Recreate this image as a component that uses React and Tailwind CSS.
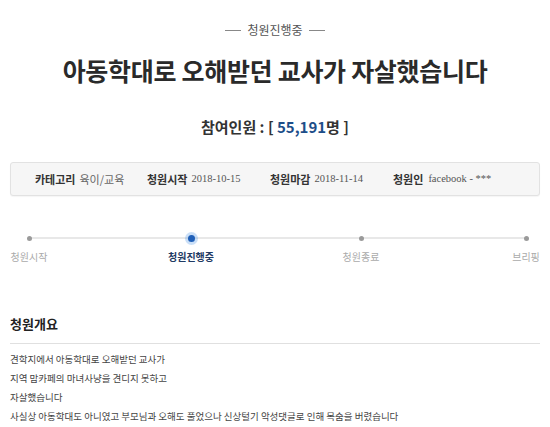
export default function App() {
  const steps = [
    { label: '청원시작', active: false, cls: 'w-[38px]' },
    { label: '청원진행중', active: true, cls: 'w-[50px] ml-[118px]' },
    { label: '청원종료', active: false, cls: 'w-[50px] ml-[120px]' },
    { label: '브리핑', active: false, cls: 'w-[28px] ml-[126px]' },
  ];

  return (
    <div
      className="bg-white w-[550px] h-[427px] overflow-hidden px-[10px]"
      style={{ fontFamily: '"Noto Sans CJK KR", "Noto Sans", sans-serif' }}
    >
      {/* Status */}
      <div className="mt-[22px] flex items-center justify-center gap-[6px] text-[12px] leading-[16px] text-[#555]">
        <span className="inline-block w-[16px] h-px bg-[#888]"></span>
        <span>청원진행중</span>
        <span className="inline-block w-[16px] h-px bg-[#888]"></span>
      </div>

      {/* Title */}
      <h1 className="mt-[17px] text-center text-[25px] leading-[30px] font-bold text-[#2a2a2a] tracking-[-0.3px]">
        아동학대로 오해받던 교사가 자살했습니다
      </h1>

      {/* Count */}
      <div className="mt-[32px] text-center text-[15px] leading-[20px] font-bold text-[#333]">
        참여인원 : [ <span className="text-[#1d4e89]">55,191</span>명 ]
      </div>

      {/* Info box */}
      <div className="mt-[25px] h-[34px] flex items-center px-[24px] bg-[#f6f6f6] border border-[#e2e2e2] rounded-[3px] shadow-[0_1px_1px_rgba(0,0,0,0.04)] text-[11px] leading-[14px]">
        <div className="flex items-center gap-[4px] w-[112px]">
          <span className="font-bold text-[#333]">카테고리</span>
          <span className="text-[#666]">육이/교육</span>
        </div>
        <div className="flex items-center gap-[4px] w-[123px]">
          <span className="font-bold text-[#333]">청원시작</span>
          <span className="text-[#555] text-[10.5px]" style={{ fontFamily: '"Liberation Serif", serif' }}>2018-10-15</span>
        </div>
        <div className="flex items-center gap-[4px] w-[123px]">
          <span className="font-bold text-[#333]">청원마감</span>
          <span className="text-[#555] text-[10.5px]" style={{ fontFamily: '"Liberation Serif", serif' }}>2018-11-14</span>
        </div>
        <div className="flex items-center gap-[5px]">
          <span className="font-bold text-[#333]">청원인</span>
          <span className="text-[#555] text-[10.5px]" style={{ fontFamily: '"Liberation Serif", serif' }}>facebook - ***</span>
        </div>
      </div>

      {/* Progress */}
      <div className="relative mt-[36px]">
        <div className="absolute left-[19px] right-[14px] top-[5px] h-[2px] bg-[#e8e8e8]"></div>
        <div className="relative flex">
          {steps.map((s) => (
            <div key={s.label} className={'flex flex-col items-center ' + s.cls}>
              <div className="h-[12px] flex items-center justify-center">
                {s.active ? (
                  <span className="block w-[7px] h-[7px] rounded-full bg-[#1f5fb8] shadow-[0_0_0_3px_rgba(80,150,230,0.3)]"></span>
                ) : (
                  <span className="block w-[5px] h-[5px] rounded-full bg-[#9a9a9a]"></span>
                )}
              </div>
              <span
                className={
                  s.active
                    ? 'mt-[6px] text-[10px] leading-[14px] font-bold text-[#1f3a63] whitespace-nowrap'
                    : 'mt-[6px] text-[10px] leading-[14px] text-[#aaa] whitespace-nowrap'
                }
              >
                {s.label}
              </span>
            </div>
          ))}
        </div>
      </div>

      {/* Summary */}
      <h2 className="mt-[51px] pb-[10px] border-b border-[#e0e0e0] text-[13px] leading-[18px] font-bold text-[#222]">
        청원개요
      </h2>
      <div className="mt-[6px] text-[9.5px] leading-[19px] text-[#444]">
        <p>견학지에서 아동학대로 오해받던 교사가</p>
        <p>지역 맘카페의 마녀사냥을 견디지 못하고</p>
        <p>자살했습니다</p>
        <p>사실상 아동학대도 아니였고 부모님과 오해도 풀었으나 신상털기 악성댓글로 인해 목숨을 버렸습니다</p>
      </div>
    </div>
  );
}
